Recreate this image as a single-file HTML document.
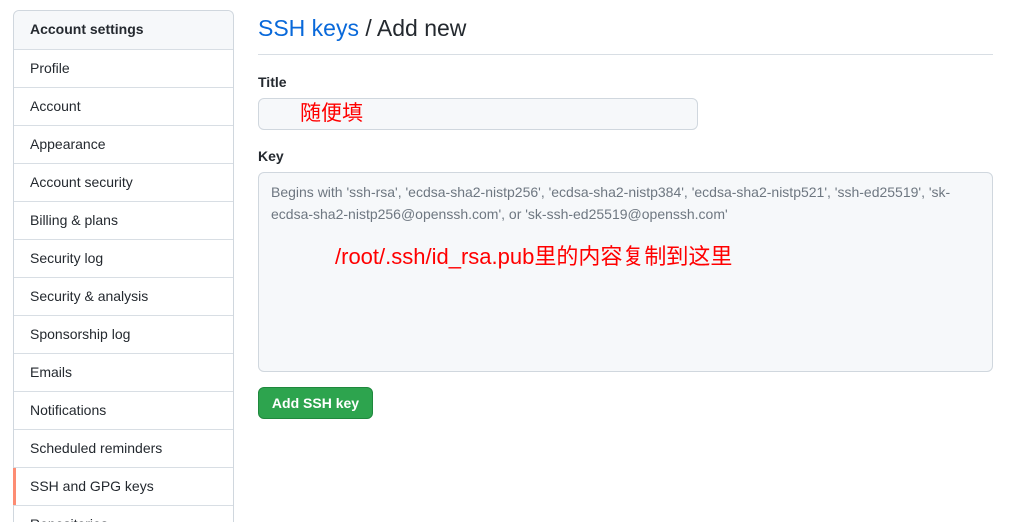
<!DOCTYPE html>
<html><head><meta charset="utf-8"><style>
*{box-sizing:border-box;margin:0;padding:0}
html,body{width:1025px;height:522px;overflow:hidden}
body{background:#fff;font-family:"Liberation Sans","Noto Sans CJK SC",sans-serif;color:#24292f;position:relative}
.side{position:absolute;left:13px;top:10px;width:221px;border:1px solid #d0d7de;border-radius:6px 6px 0 0;border-bottom:none}
.side div{height:38px;line-height:37px;padding-left:16px;font-size:14px;border-top:1px solid #d8dee4;position:relative}
.side div:first-child{border-top:none;font-weight:bold;background:#f6f8fa;border-radius:6px 6px 0 0}
.side .sel:before{content:"";position:absolute;left:-1px;top:0;bottom:0;width:3px;background:#fd8c73}
h1{position:absolute;left:258px;top:15px;font-size:23px;font-weight:normal}
h1 a{color:#0969da}
.hr{position:absolute;left:258px;top:54px;width:735px;height:1px;background:#d8dee4}
.lbl{position:absolute;left:258px;font-size:14px;font-weight:bold}
.inp{position:absolute;left:258px;top:98px;width:440px;height:32px;border:1px solid #d0d7de;border-radius:6px;background:#f6f8fa}
.ta{position:absolute;left:258px;top:172px;width:735px;height:200px;border:1px solid #d0d7de;border-radius:6px;background:#f6f8fa;padding:8px 12px;font-size:14px;line-height:22px;color:#6e7781}
.red{position:absolute;color:#f00;font-family:"Liberation Sans","Noto Sans CJK JP",sans-serif}
.btn{position:absolute;left:258px;top:387px;width:115px;height:32px;background:#2da44e;border:1px solid #1f883d;border-radius:6px;color:#fff;font-weight:bold;font-size:14px;line-height:30px;text-align:center}
</style></head><body>
<div class="side">
<div>Account settings</div><div>Profile</div><div>Account</div><div>Appearance</div><div>Account security</div><div>Billing &amp; plans</div><div>Security log</div><div>Security &amp; analysis</div><div>Sponsorship log</div><div>Emails</div><div>Notifications</div><div>Scheduled reminders</div><div class="sel">SSH and GPG keys</div><div>Repositories</div>
</div>
<h1><a>SSH keys</a> / Add new</h1>
<div class="hr"></div>
<div class="lbl" style="top:74px">Title</div>
<div class="inp"></div>
<div class="red" style="left:300px;top:97px;font-size:21px">随便填</div>
<div class="lbl" style="top:148px">Key</div>
<div class="ta">Begins with 'ssh-rsa', 'ecdsa-sha2-nistp256', 'ecdsa-sha2-nistp384', 'ecdsa-sha2-nistp521', 'ssh-ed25519', 'sk-ecdsa-sha2-nistp256@openssh.com', or 'sk-ssh-ed25519@openssh.com'</div>
<div class="red" style="left:335px;top:239px;font-size:22px">/root/.ssh/id_rsa.pub里的内容复制到这里</div>
<div class="btn">Add SSH key</div>
</body></html>
